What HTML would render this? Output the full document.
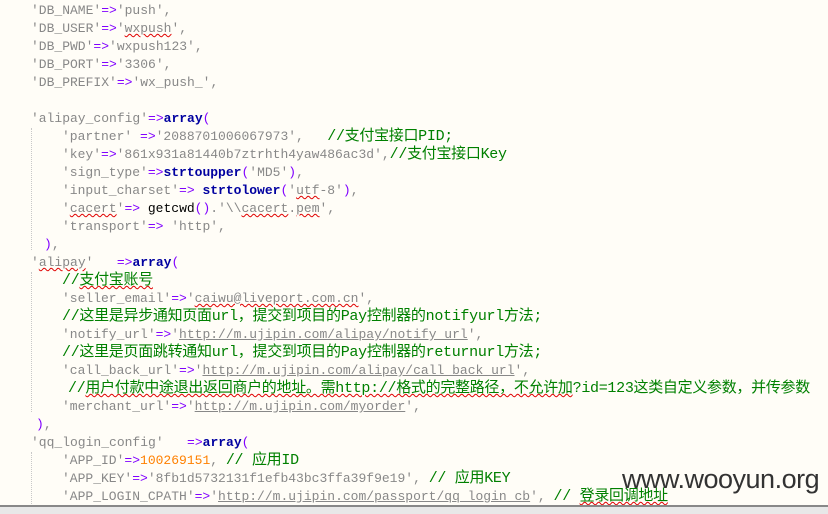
<!DOCTYPE html>
<html><head><meta charset="utf-8"><style>
body{margin:0;width:828px;height:512px;background:#fffdf7;overflow:hidden;position:relative;font-family:"Liberation Mono","Noto Sans CJK SC",monospace;font-size:13px;}
.l{position:absolute;white-space:pre;line-height:18px;color:#888;}
.o{color:#8000ff}.a{color:#0000a0;font-weight:bold}.c{color:#008000;font-size:15px;font-family:"Liberation Mono","Noto Sans CJK SC",monospace;letter-spacing:-0.3px}.n{color:#ff8000}.k{color:#000}
.u{text-decoration:underline}
.w{text-decoration:underline wavy #e00000;text-decoration-thickness:1px}
.g{position:absolute;border-left:1px dotted #c8c8c8;}
#wm{position:absolute;left:622px;top:464px;font-family:"Liberation Sans",sans-serif;font-size:27px;color:#333;letter-spacing:-0.5px}
#bar{position:absolute;left:0;top:505px;width:828px;height:7px;background:#e8e8e8;border-top:2px solid #888}
</style></head><body>
<div class="g" style="left:31px;top:128px;height:122px"></div>
<div class="g" style="left:31px;top:272px;height:140px"></div>
<div class="g" style="left:31px;top:452px;height:54px"></div>
<div class="l" style="left:31px;top:2px">'DB_NAME'<span class="o">=&gt;</span>'push',</div>
<div class="l" style="left:31px;top:20px">'DB_USER'<span class="o">=&gt;</span>'<span class="w">wxpush</span>',</div>
<div class="l" style="left:31px;top:38px">'DB_PWD'<span class="o">=&gt;</span>'wxpush123',</div>
<div class="l" style="left:31px;top:56px">'DB_PORT'<span class="o">=&gt;</span>'3306',</div>
<div class="l" style="left:31px;top:74px">'DB_PREFIX'<span class="o">=&gt;</span>'wx_push_',</div>
<div class="l" style="left:31px;top:110px">'alipay_config'<span class="o">=&gt;</span><span class="a">array</span><span class="o">(</span></div>
<div class="l" style="left:62px;top:128px">'partner' <span class="o">=&gt;</span>'2088701006067973',   <span class="c">//支付宝接口PID;</span></div>
<div class="l" style="left:62px;top:146px">'key'<span class="o">=&gt;</span>'861x931a81440b7ztrhth4yaw486ac3d',<span class="c">//支付宝接口Key</span></div>
<div class="l" style="left:62px;top:164px">'sign_type'<span class="o">=&gt;</span><span class="a">strtoupper</span><span class="o">(</span>'MD5'<span class="o">)</span>,</div>
<div class="l" style="left:62px;top:182px">'input_charset'<span class="o">=&gt;</span> <span class="a">strtolower</span><span class="o">(</span>'<span class="w">utf</span>-8'<span class="o">)</span>,</div>
<div class="l" style="left:62px;top:200px">'<span class="w">cacert</span>'<span class="o">=&gt;</span> <span class="k">getcwd</span><span class="o">()</span>.'\\<span class="w">cacert</span>.<span class="w">pem</span>',</div>
<div class="l" style="left:62px;top:218px">'transport'<span class="o">=&gt;</span> 'http',</div>
<div class="l" style="left:44px;top:236px"><span class="o">)</span>,</div>
<div class="l" style="left:31px;top:254px">'<span class="w">alipay</span>'   <span class="o">=&gt;</span><span class="a">array</span><span class="o">(</span></div>
<div class="l" style="left:62px;top:272px"><span class="c">//<span class="w">支付宝账号</span></span></div>
<div class="l" style="left:62px;top:290px">'seller_email'<span class="o">=&gt;</span>'<span class="w">caiwu@liveport.com.cn</span>',</div>
<div class="l" style="left:62px;top:308px"><span class="c">//这里是异步通知页面url，提交到项目的Pay控制器的notifyurl方法;</span></div>
<div class="l" style="left:62px;top:326px">'notify_url'<span class="o">=&gt;</span>'<span class="u">http://m.ujipin.com/alipay/notify_url</span>',</div>
<div class="l" style="left:62px;top:344px"><span class="c">//这里是页面跳转通知url，提交到项目的Pay控制器的returnurl方法;</span></div>
<div class="l" style="left:62px;top:362px">'call_back_url'<span class="o">=&gt;</span>'<span class="u">http://m.ujipin.com/alipay/call_back_url</span>',</div>
<div class="l" style="left:68px;top:380px"><span class="c">//<span class="w">用户付款中途退出返回商户的地址。需http://格式的完整路径，不允许加</span>?id=123这类自定义参数，并传参数</span></div>
<div class="l" style="left:62px;top:398px">'merchant_url'<span class="o">=&gt;</span>'<span class="u">http://m.ujipin.com/myorder</span>',</div>
<div class="l" style="left:36px;top:416px"><span class="o">)</span>,</div>
<div class="l" style="left:31px;top:434px">'qq_login_config'   <span class="o">=&gt;</span><span class="a">array</span><span class="o">(</span></div>
<div class="l" style="left:62px;top:452px">'APP_ID'<span class="o">=&gt;</span><span class="n">100269151</span>, <span class="c">// 应用ID</span></div>
<div class="l" style="left:62px;top:470px">'APP_KEY'<span class="o">=&gt;</span>'8fb1d5732131f1efb43bc3ffa39f9e19', <span class="c">// 应用KEY</span></div>
<div class="l" style="left:62px;top:488px">'APP_LOGIN_CPATH'<span class="o">=&gt;</span>'<span class="u">http://m.ujipin.com/passport/qq_login_cb</span>', <span class="c">// <span class="w">登录回调地址</span></span></div>
<div id="wm">www.wooyun.org</div>
<div id="bar"></div>
</body></html>
